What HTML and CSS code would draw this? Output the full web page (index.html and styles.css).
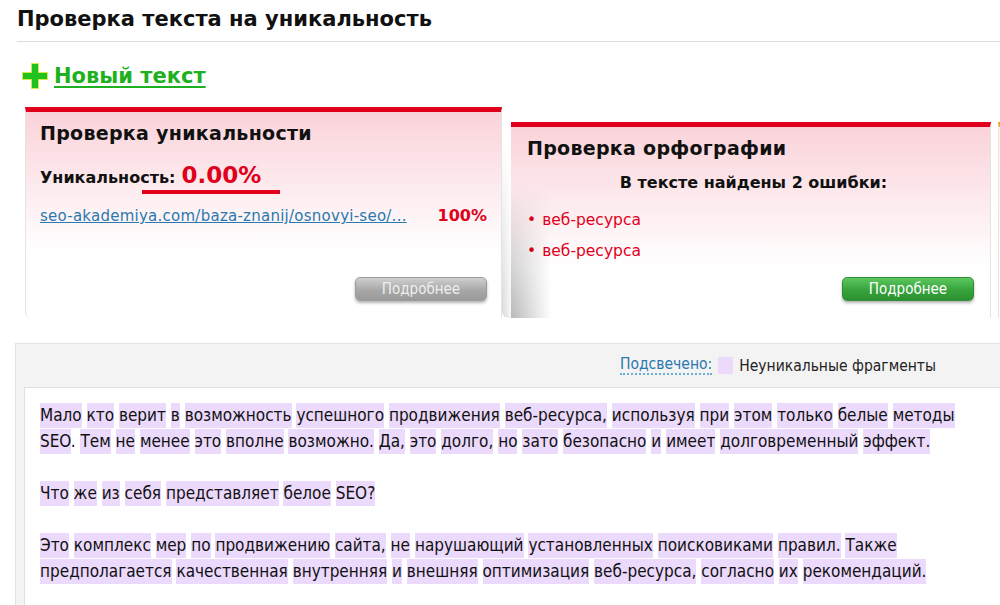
FILE: index.html
```html
<!doctype html>
<html lang="ru">
  <head>
    <meta charset="utf-8" />
    <meta name="viewport" content="width=device-width, initial-scale=1" />
    <title>Проверка текста на уникальность</title>
    <link rel="stylesheet" href="styles.css">
  </head>
  <body>
    <h1 class="title">Проверка текста на уникальность</h1>

    <a class="new-text" href="#">
      <svg class="plus" width="26" height="26" viewBox="0 0 26 26">
        <path d="M9.5 0.5h7v9h9v7h-9v9h-7v-9h-9v-7h9z" fill="#1fc21f" stroke="#d8e84a" stroke-width="1"/>
      </svg>
      <span>Новый текст</span>
    </a>

    <div class="cards">
      <div class="card card-uniq">
        <h2>Проверка уникальности</h2>
        <div class="uniq-line">
          <span class="uniq-label">Уникальность:</span>
          <span class="uniq-value">0.00%</span>
        </div>
        <div class="source">
          <a href="#">seo-akademiya.com/baza-znanij/osnovyi-seo/...</a>
          <span class="source-pct">100%</span>
        </div>
        <div class="card-foot">
          <button class="btn btn-gray" type="button">Подробнее</button>
        </div>
      </div>

      <div class="card card-spell">
        <h2>Проверка орфографии</h2>
        <div class="errors-head">В тексте найдены 2 ошибки:</div>
        <ul class="errors">
          <li>веб-ресурса</li>
          <li>веб-ресурса</li>
        </ul>
        <div class="card-foot">
          <button class="btn btn-green" type="button">Подробнее</button>
        </div>
      </div>

      <div class="card card-next"></div>
    </div>

    <div class="result">
      <div class="legend">
        <a class="legend-link" href="#">Подсвечено:</a>
        <span class="swatch"></span>
        <span>Неуникальные фрагменты</span>
      </div>
      <div class="text-box">
        <p>
          <span class="hl">Мало</span> <span class="hl">кто</span> <span class="hl">верит</span> <span class="hl">в</span> <span class="hl">возможность</span> <span class="hl">успешного</span> <span class="hl">продвижения</span> <span class="hl">веб-ресурса,</span> <span class="hl">используя</span> <span class="hl">при</span> <span class="hl">этом</span> <span class="hl">только</span> <span class="hl">белые</span> <span class="hl">методы</span>
          <span class="hl">SEO</span>. <span class="hl">Тем</span> <span class="hl">не</span> <span class="hl">менее</span> <span class="hl">это</span> <span class="hl">вполне</span> <span class="hl">возможно.</span> <span class="hl">Да,</span> <span class="hl">это</span> <span class="hl">долго,</span> <span class="hl">но</span> <span class="hl">зато</span> <span class="hl">безопасно</span> <span class="hl">и</span> <span class="hl">имеет</span> <span class="hl">долговременный</span> <span class="hl">эффект.</span>
        </p>
        <p>
          <span class="hl">Что</span> <span class="hl">же</span> <span class="hl">из</span> <span class="hl">себя</span> <span class="hl">представляет</span> <span class="hl">белое</span> <span class="hl">SEO?</span>
        </p>
        <p>
          <span class="hl">Это</span> <span class="hl">комплекс</span> <span class="hl">мер</span> <span class="hl">по</span> <span class="hl">продвижению</span> <span class="hl">сайта,</span> <span class="hl">не</span> <span class="hl">нарушающий</span> <span class="hl">установленных</span> <span class="hl">поисковиками</span> <span class="hl">правил.</span> <span class="hl">Также</span>
          <span class="hl">предполагается</span> <span class="hl">качественная</span> <span class="hl">внутренняя</span> <span class="hl">и</span> <span class="hl">внешняя</span> <span class="hl">оптимизация</span> <span class="hl">веб-ресурса,</span> <span class="hl">согласно</span> <span class="hl">их</span> <span class="hl">рекомендаций.</span>
        </p>
      </div>
    </div>
  </body>
</html>
```

FILE: styles.css
```css
body {
  margin: 0;
  font-family: "DejaVu Sans", sans-serif;
  color: #111;
  background: #fff;
  overflow: hidden;
}
.title {
  margin: 0 0 0 17px;
  padding-top: 7px;
  height: 34px;
  font-size: 21px;
  font-weight: 700;
  border-bottom: 1px solid #dcdcdc;
}
.new-text {
  display: inline-flex;
  align-items: center;
  gap: 6px;
  margin: 21px 0 0 22px;
  color: #1eb01e;
  font-size: 21px;
  font-weight: 700;
  text-decoration: none;
}
.new-text span {
  text-decoration: underline;
  text-underline-offset: 3px;
  text-decoration-thickness: 2px;
}
.cards {
  display: flex;
  align-items: flex-start;
  margin: 14px 0 0 25px;
  white-space: nowrap;
}
.card {
  flex-shrink: 0;
  border-top: 5px solid #e0001b;
  background: linear-gradient(#fad3da 0, #fff 140px);
  border-left: 1px solid #e4e4e4;
  border-right: 1px solid #e4e4e4;
  box-sizing: border-box;
}
.card h2 {
  margin: 0;
  font-size: 19px;
  font-weight: 700;
  letter-spacing: 0.3px;
}
.card-uniq {
  width: 477px;
  height: 211px;
  padding: 10px 14px 0 14px;
  border-bottom-left-radius: 6px;
  display: flex;
  flex-direction: column;
}
.uniq-line {
  position: relative;
  margin-top: 18px;
  display: flex;
  align-items: baseline;
  gap: 6px;
}
.uniq-line::after {
  content: "";
  position: absolute;
  left: 102px;
  width: 138px;
  bottom: -6px;
  height: 4px;
  background: #e0001b;
}
.uniq-label {
  font-size: 16px;
  font-weight: 700;
}
.uniq-value {
  color: #e0001b;
  font-size: 23px;
  font-weight: 700;
}
.source {
  margin-top: 18px;
  display: flex;
  justify-content: space-between;
  align-items: baseline;
}
.source a {
  font-size: 15px;
  letter-spacing: 0.25px;
  color: #2a78b0;
  text-decoration: underline;
}
.source-pct {
  color: #e0001b;
  font-size: 16px;
  font-weight: 700;
}
.card-foot {
  margin-top: auto;
  display: flex;
  justify-content: flex-end;
  padding-bottom: 17px;
}
.card-spell {
  width: 480px;
  height: 196px;
  margin-top: 15px;
  margin-left: 9px;
  padding: 10px 16px 0 16px;
  border-left: none;
  border-bottom-left-radius: 6px;
  display: flex;
  flex-direction: column;
  position: relative;
}
.card-spell::before {
  content: "";
  position: absolute;
  left: -9px;
  top: -5px;
  bottom: 0;
  width: 9px;
  border-bottom-left-radius: 6px;
  background: linear-gradient(to right, rgba(0, 0, 0, 0.15), rgba(0, 0, 0, 0.03));
  -webkit-mask-image: linear-gradient(transparent 10%, #000 100%);
  mask-image: linear-gradient(transparent 10%, #000 100%);
}
.card-spell::after {
  content: "";
  position: absolute;
  left: 0;
  top: 0;
  bottom: 0;
  width: 40px;
  background: linear-gradient(to right, rgba(0, 0, 0, 0.28), rgba(0, 0, 0, 0));
  -webkit-mask-image: linear-gradient(transparent 30%, #000 100%);
  mask-image: linear-gradient(transparent 30%, #000 100%);
  pointer-events: none;
}
.errors-head {
  margin-top: 14px;
  text-align: center;
  font-size: 16px;
  font-weight: 700;
  padding-left: 6px;
}
.errors {
  list-style: none;
  margin: 13px 0 0 0;
  padding: 0;
  color: #e0001b;
  font-size: 15.5px;
}
.errors li {
  line-height: 31px;
}
.errors li::before {
  content: "•";
  margin-right: 6px;
}
.card-next {
  width: 40px;
  height: 196px;
  margin-top: 15px;
  margin-left: 7px;
  border-top-color: #f4a31b;
  background: linear-gradient(#fff6dc 0, #fff 140px);
}
.btn {
  width: 132px;
  height: 24px;
  border-radius: 5px;
  font-family: "DejaVu Sans Condensed", "DejaVu Sans", sans-serif;
  font-size: 15px;
  color: #fff;
  padding: 0;
  box-shadow: 0 2px 3px rgba(0, 0, 0, 0.3);
}
.btn-gray {
  background: linear-gradient(#cfcfcf, #a8a8a8 55%, #9a9a9a);
  border: 1px solid #9c9c9c;
  color: #eee;
}
.btn-green {
  background: linear-gradient(#5cc75f, #37a33c 55%, #2c9131);
  border: 1px solid #2f8f33;
}
.result {
  margin: 25px 0 0 15px;
  background: #f3f3f3;
  border: 1px solid #e2e2e2;
  border-right: none;
  border-bottom: none;
  height: 262px;
  overflow: hidden;
  font-family: "DejaVu Sans Condensed", "DejaVu Sans", sans-serif;
}
.legend {
  height: 43px;
  display: flex;
  align-items: center;
  justify-content: flex-end;
  padding-right: 64px;
  font-size: 15.5px;
  color: #222;
}
.legend-link {
  color: #2a78b0;
  text-decoration: none;
  border-bottom: 2px dotted #6aaed8;
  line-height: 17px;
}
.swatch {
  width: 15px;
  height: 17px;
  background: #ecdafc;
  margin: 0 6px;
}
.text-box {
  margin-left: 8px;
  background: #fff;
  border: 1px solid #e0e0e0;
  border-right: none;
  border-bottom: none;
  height: 218px;
  padding: 14px 14px 0 15px;
  font-size: 17px;
  line-height: 26px;
  color: #111;
}
.text-box p {
  margin: 0 0 26px 0;
}
.hl {
  background: #ecdafc;
  padding: 2px 0 3px;
}
```
